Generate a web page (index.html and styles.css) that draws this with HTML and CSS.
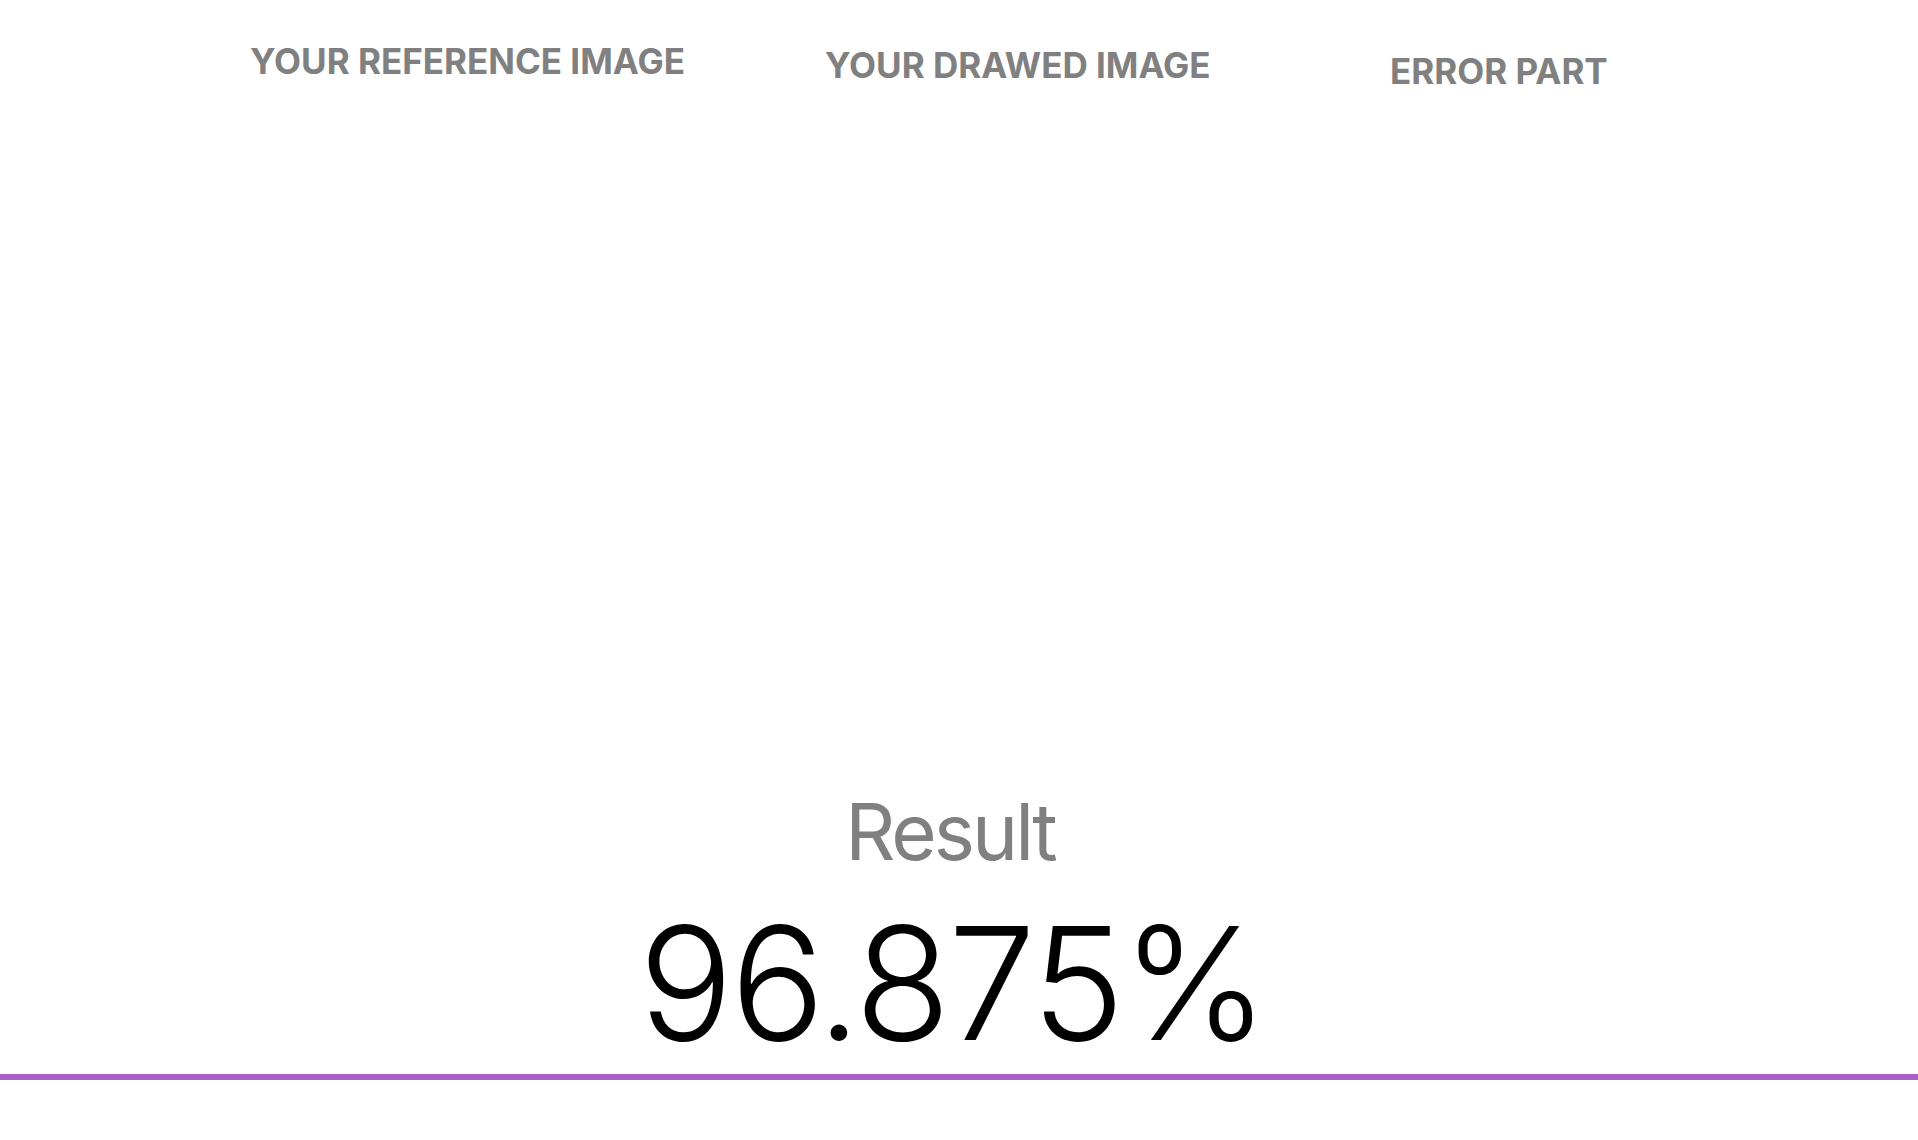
FILE: index.html
```html
<!DOCTYPE html>
<html lang="en">
<head>
<meta charset="utf-8">
<title>Result</title>
<link rel="stylesheet" href="styles.css">
</head>
<body>
<div class="page">
  <div class="headers">
    <div class="col col-ref"><h2 class="col-title">YOUR REFERENCE IMAGE</h2></div>
    <div class="col col-drawn"><h2 class="col-title">YOUR DRAWED IMAGE</h2></div>
    <div class="col col-error"><h2 class="col-title">ERROR PART</h2></div>
  </div>
  <div class="result">
    <div class="result-label">Result</div>
    <div class="result-value">96.875%</div>
  </div>
  <div class="bar"></div>
</div>
</body>
</html>
```

FILE: styles.css
```css
html, body {
  margin: 0;
  padding: 0;
  background: #ffffff;
}

body {
  font-family: Inter, "Noto Sans", "Liberation Sans", sans-serif;
  width: 1918px;
  height: 1140px;
  overflow: hidden;
}

.page {
  display: flex;
  flex-direction: column;
  height: 1140px;
}

.headers {
  display: flex;
  align-items: flex-start;
  padding-left: 250px;
  height: 100px;
}

.col-title {
  margin: 0;
  font-size: 35px;
  line-height: 1;
  font-weight: 700;
  color: #808080;
  white-space: nowrap;
}

.col-ref {
  width: 575px;
  padding-top: 44px;
}

.col-drawn {
  width: 565px;
  padding-top: 48px;
}

.col-error {
  padding-top: 54px;
}

.result {
  margin-top: 693px;
  padding-right: 18px;
  display: flex;
  flex-direction: column;
  align-items: center;
}

.result-label {
  font-size: 78px;
  line-height: 1;
  font-weight: 400;
  letter-spacing: -3px;
  color: #808080;
}

.result-value {
  margin-top: 34px;
  padding-left: 5px;
  font-size: 157px;
  line-height: 1;
  font-weight: 300;
  letter-spacing: -2.8px;
  color: #000000;
}

.bar {
  margin-top: 12px;
  height: 6px;
  background: #a95fca;
}
```
